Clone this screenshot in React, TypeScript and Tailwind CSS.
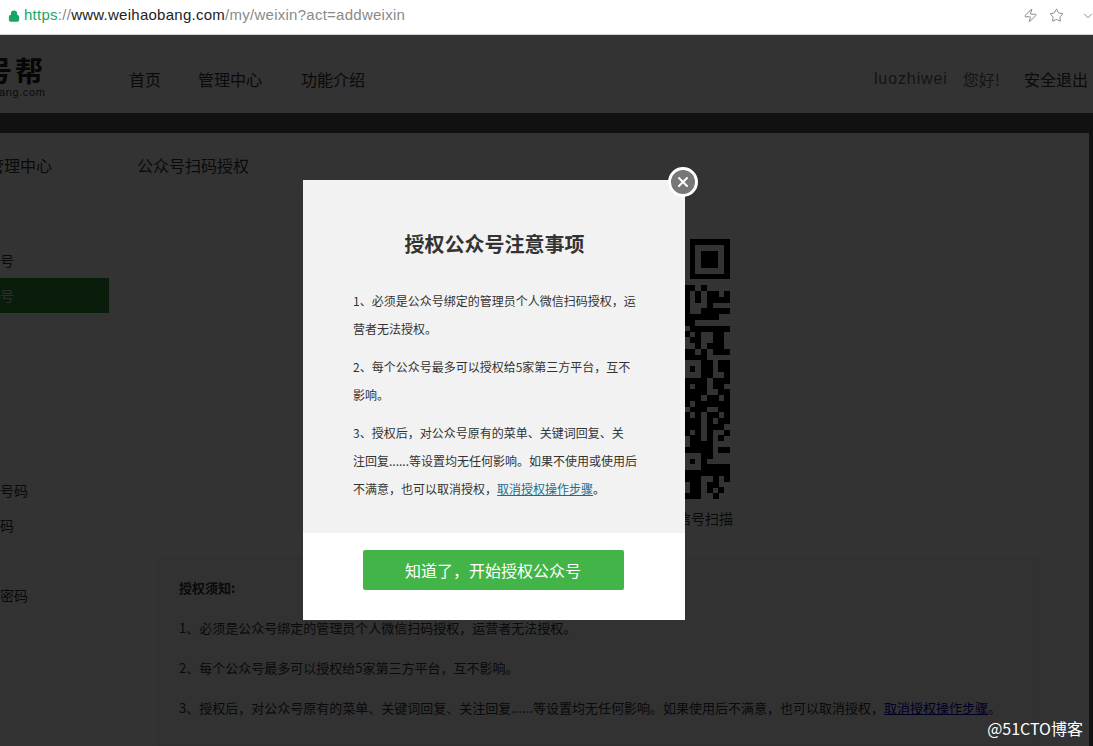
import { Lock, Zap, Star, ChevronDown, X } from "lucide-react";

const C = "\uFF0C";

const qrRows = [
  "11010000","10101101","10101111","10001000","10011111","11111100","11000000","01111111",
  "10100110","01100110","00101110","11010111","11110000","00011011","01011011","00011001",
  "11110111","10110110","11110011","11101101","10111111","01110011","10101101","11101011",
  "11101110","10101001","01101010","01111000","11111011","00011000","01010000","00011111",
  "11111111","11100101","01101100","01101010","11100100",
];

function Finder({ x, y }: { x: number; y: number }) {
  return (
    <g>
      <rect x={x} y={y} width="7" height="7" fill="#000" />
      <rect x={x + 1} y={y + 1} width="5" height="5" fill="#fff" />
      <rect x={x + 2} y={y + 2} width="3" height="3" fill="#000" />
    </g>
  );
}

function Qr() {
  return (
    <svg width="260" height="260" viewBox="0 0 45 45" shapeRendering="crispEdges">
      <rect width="45" height="45" fill="#fff" />
      <Finder x={0} y={0} />
      <Finder x={38} y={0} />
      <Finder x={0} y={38} />
      {qrRows.map((row, r) =>
        row.split("").map((c, i) =>
          c === "1" ? <rect key={`${r}-${i}`} x={37 + i} y={8 + r} width="1.02" height="1.02" fill="#000" /> : null
        )
      )}
    </svg>
  );
}

const F = "font-['Noto_Sans_CJK_SC','Noto_Sans',sans-serif]";

export default function App() {
  return (
    <div className={`h-[746px] w-[1093px] overflow-hidden flex flex-col bg-white ${F}`}>
      <div className="h-[35px] shrink-0 flex items-center pb-[3px] bg-white border-b border-[#d4d4d4]">
        <Lock size={12} className="ml-[8px] text-[#17a765]" fill="#17a765" strokeWidth={2.5} />
        <div className="ml-[4px] text-[15px] tracking-[0.26px] text-[#8a8a8a] font-['Liberation_Sans',sans-serif]">
          <span className="text-[#17a765]">https</span>
          <span>://</span>
          <span className="text-[#222]">www.weihaobang.com</span>
          <span>/my/weixin?act=addweixin</span>
        </div>
        <div className="ml-auto flex items-center text-[#777]">
          <Zap size={15} strokeWidth={1.4} />
          <Star size={15} strokeWidth={1.4} className="ml-[11px]" />
          <ChevronDown size={14} strokeWidth={1.4} className="ml-[17px] mr-[-2px]" />
        </div>
      </div>

      <div className="relative flex-1 min-h-0 flex flex-col bg-[#555]">
        <div className="h-[78px] shrink-0 bg-white flex items-center pt-[10px] text-[#333] text-[16px]">
          <div className="w-[129px] shrink-0 -mt-[6px] flex flex-col items-start">
            <div className="whitespace-nowrap text-[28px] leading-[32px] font-semibold tracking-[3px] -ml-[16px] text-[#222]">号帮</div>
            <div className="whitespace-nowrap text-[11px] leading-[13px] tracking-[0.6px] text-[#333] -ml-[1px] font-['Liberation_Sans',sans-serif]">ang.com</div>
          </div>
          <span className="w-[69px]">首页</span>
          <span className="w-[103px]">管理中心</span>
          <span>功能介绍</span>
          <div className="ml-auto mr-[5px] flex items-center">
            <span className="font-['Liberation_Sans',sans-serif] tracking-[0.9px] text-[#666]">luozhiwei</span>
            <span className="ml-[15px] text-[#666]">您好!</span>
            <span className="ml-[24px]">安全退出</span>
          </div>
        </div>

        <div className="h-[20px] shrink-0 bg-[#555]" />

        <div className="flex-1 min-h-0 mr-[4px] bg-white flex overflow-hidden">
          <div className="w-[109px] shrink-0 overflow-hidden">
            <div className="w-[209px] -ml-[100px] text-[14px] text-[#333]">
              <div className="h-[64px] pl-[88px] flex items-center text-[16px] border-b border-[#eee]">管理中心</div>
              <div className="mt-[46px] h-[35px] pl-[44px] flex items-center">我的公众号</div>
              <div className="h-[35px] pl-[44px] flex items-center bg-[#36913a] text-[#ddd]">添加公众号</div>
              <div className="mt-[160px] h-[35px] pl-[44px] flex items-center">绑定手机号码</div>
              <div className="h-[35px] pl-[44px] flex items-center">绑定二维码</div>
              <div className="mt-[35px] h-[35px] pl-[44px] flex items-center">修改登录密码</div>
            </div>
          </div>

          <div className="ml-[28px] w-[926px] shrink-0 flex flex-col">
            <div className="h-[64px] shrink-0 flex items-center text-[16px] text-[#333] border-b border-[#eee]">公众号扫码授权</div>
            <div className="mt-[42px] mx-auto">
              <Qr />
            </div>
            <div className="mt-[8px] text-center text-[14px] leading-[22px] text-[#333]">请使用公众号绑定的管理员个人微信号扫描</div>
            <div className="mt-[29px] ml-[20px] w-[883px] h-[200px] bg-[#f8f8f8] border border-[#eee] pl-[21px] pt-[9px] text-[13px] leading-[40px] text-[#333]">
              <div className="font-semibold">授权须知:</div>
              <div>1、必须是公众号绑定的管理员个人微信扫码授权{C}运营者无法授权。</div>
              <div>2、每个公众号最多可以授权给5家第三方平台{C}互不影响。</div>
              <div className="whitespace-nowrap">
                3、授权后{C}对公众号原有的菜单、关键词回复、关注回复......等设置均无任何影响。如果使用后不满意{C}也可以取消授权{C}
                <span className="text-[#0000bb] underline">取消授权操作步骤</span>。
              </div>
            </div>
          </div>
        </div>

        <div className="absolute inset-0 bg-black/80" />

        <div className="absolute left-[303px] top-[145px] w-[382px] h-[440px] bg-white flex flex-col">
          <div className="h-[353px] bg-[#f2f2f2] pt-[47px] pl-[50px] pr-[47px] text-[#333]">
            <h2 className="text-center text-[20px] leading-[34px] font-semibold -ml-[2px]">授权公众号注意事项</h2>
            <div className="mt-[26px] text-[12px] leading-[28px]">
              <p>1、必须是公众号绑定的管理员个人微信扫码授权{C}运营者无法授权。</p>
              <p className="mt-[10px]">2、每个公众号最多可以授权给5家第三方平台{C}互不影响。</p>
              <p className="mt-[10px]">
                3、授权后{C}对公众号原有的菜单、关键词回复、关<br />注回复......等设置均无任何影响。如果不使用或使用后<br />不满意{C}也可以取消授权{C}
                <span className="text-[#1c6d8c] underline">取消授权操作步骤</span>。
              </p>
            </div>
          </div>
          <div className="flex-1 flex justify-center pt-[17px]">
            <button className="w-[261px] h-[40px] bg-[#43b548] rounded-[2px] text-white text-[16px] -ml-[2px]">知道了{C}开始授权公众号</button>
          </div>
          <div className="absolute -right-[13px] -top-[13px] w-[30px] h-[30px] rounded-full bg-[#777] border-[3px] border-white flex items-center justify-center">
            <X size={16} strokeWidth={3} className="text-white" />
          </div>
        </div>

        <div className="absolute right-[10px] bottom-[8px] text-[16px] leading-[20px] text-white">@51CTO博客</div>
      </div>
    </div>
  );
}
